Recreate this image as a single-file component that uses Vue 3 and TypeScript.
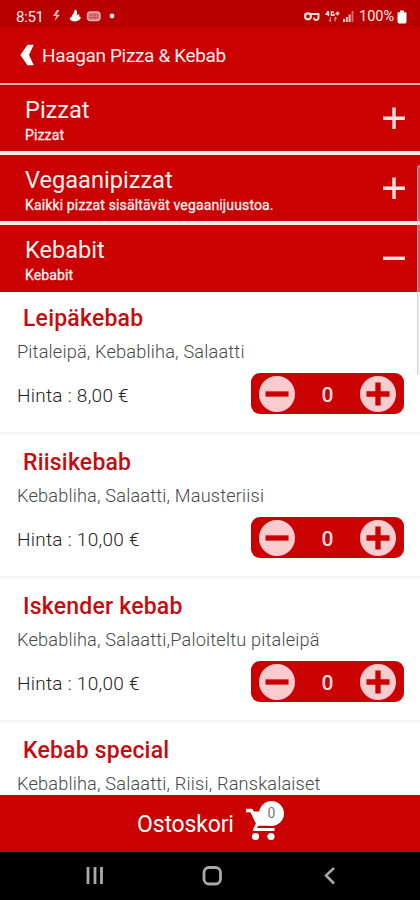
<script setup lang="ts">
import { reactive, ref, computed } from 'vue'

interface Category {
  name: string
  note: string
  open: boolean
}

interface Dish {
  name: string
  contents: string
  price: string
  count: number
}

const categories = reactive<Category[]>([
  { name: 'Pizzat', note: 'Pizzat', open: false },
  { name: 'Vegaanipizzat', note: 'Kaikki pizzat sisältävät vegaanijuustoa.', open: false },
  { name: 'Kebabit', note: 'Kebabit', open: true },
])

const dishes = reactive<Dish[]>([
  { name: 'Leipäkebab', contents: 'Pitaleipä, Kebabliha, Salaatti', price: '8,00 €', count: 0 },
  { name: 'Riisikebab', contents: 'Kebabliha, Salaatti, Mausteriisi', price: '10,00 €', count: 0 },
  { name: 'Iskender kebab', contents: 'Kebabliha, Salaatti,Paloiteltu pitaleipä', price: '10,00 €', count: 0 },
])

const nextDish = { name: 'Kebab special', contents: 'Kebabliha, Salaatti, Riisi, Ranskalaiset' }

const clock = ref('8:51')
const total = computed(() => dishes.reduce((sum, d) => sum + d.count, 0))

function change(dish: Dish, step: number) {
  dish.count = Math.max(0, dish.count + step)
}
</script>

<template>
  <div class="phone">
    <div class="status">
      <span class="clock">{{ clock }}</span>
      <svg class="left-icons" width="66" height="16" viewBox="0 0 66 16">
        <path d="M7 2 3 8h3.2L4.6 13 10 6.8H6.6L9.5 2Z" fill="#f3b8b8" />
        <path d="M25 1.500c2.500 1 2.600 3.500 1.400 6l2-1.200c1.200 0 1.400 1.200.3 2.200 2.600-.2 2.600 1.700.6 3.300-2.600 2.200-7 2-8.900.2-1.200-1.300-.3-3.300 1.300-3.100C21.500 7 23 6.500 23.600 5.200 24.400 4 24.300 2.700 25 1.500Z" fill="#fff" />
        <rect x="37.500" y="4" width="12.500" height="8.500" rx="3" fill="#d87878" stroke="#f0b0b0" stroke-width="1.400" />
        <path d="M39.500 7h8.500M39.500 9.700h8.500" stroke="#c03030" stroke-width="1" stroke-dasharray="1.500 1" />
        <circle cx="62" cy="8" r="2.400" fill="#ffe9e9" />
      </svg>
      <svg class="right-icons" width="54" height="16" viewBox="0 0 54 16">
        <circle cx="5" cy="8.300" r="3" fill="none" stroke="#fbdcdc" stroke-width="2.200" />
        <path d="M7 6h8.500v3.500c0 1.500-1.200 2.500-2.500 2.500s-2-1-2-2.200" fill="none" stroke="#fbdcdc" stroke-width="1.900" />
        <path d="M25.300 3 23.400 6.200h3M25.400 3v5M31 4h-2.500v3.300H31V5.800M32.500 5.500h4M34.500 3.500v4" fill="none" stroke="#fbdcdc" stroke-width="1.500" />
        <path d="M27.500 9v4.500m-1.500-1.500 1.500 1.500M32 13.500V9m0 0 1.500 1.500" fill="none" stroke="#e78f8f" stroke-width="1.200" />
        <path d="M40 11h2v3h-2zM42.800 9h2v5h-2zM45.600 6.500h2V14h-2z" fill="#f6c9c9" />
        <path d="M48.500 3h2v11h-2z" fill="#db6b6b" />
      </svg>
      <span class="percent">100%</span>
      <svg class="battery" width="10" height="14" viewBox="0 0 10 14">
        <path d="M3 .5h4v1.700h1.200q1.300 0 1.300 1.300v8.200q0 1.800-1.800 1.800H2.300Q.5 13.500.5 11.700V3.500q0-1.300 1.300-1.300H3Z" fill="#fff" />
      </svg>
    </div>

    <header class="header">
      <svg class="back" width="14" height="22" viewBox="0 0 14 22">
        <path d="M7.500.8H13.800L9 11l4.800 10.200H7.500L.4 11Z" fill="#fff" />
      </svg>
      <h1>Haagan Pizza &amp; Kebab</h1>
    </header>

    <main class="menu">
      <section
        v-for="category in categories"
        :key="category.name"
        class="category"
        @click="category.open = !category.open"
      >
        <div>
          <h2>{{ category.name }}</h2>
          <p>{{ category.note }}</p>
        </div>
        <svg class="toggle" width="22" height="22" viewBox="0 0 22 22">
          <path :d="category.open ? 'M0 11.300h22' : 'M0 11.300h22M11 .5v21.500'" stroke="#ffe3e3" stroke-width="3.400" />
        </svg>
      </section>

      <article v-for="dish in dishes" :key="dish.name" class="dish">
        <h3>{{ dish.name }}</h3>
        <p class="contents">{{ dish.contents }}</p>
        <div class="order">
          <span class="price">Hinta : {{ dish.price }}</span>
          <div class="stepper">
            <button @click="change(dish, -1)">
              <svg width="36" height="36" viewBox="0 0 36 36">
                <circle cx="18" cy="18" r="18" fill="#facccf" />
                <path d="M6.500 18h23" stroke="#cb0000" stroke-width="5.300" />
              </svg>
            </button>
            <span class="count">{{ dish.count }}</span>
            <button @click="change(dish, 1)">
              <svg width="36" height="36" viewBox="0 0 36 36">
                <circle cx="18" cy="18" r="18" fill="#facccf" />
                <path d="M6.500 18h23M18 6.500v23" stroke="#cb0000" stroke-width="5.300" />
              </svg>
            </button>
          </div>
        </div>
      </article>
      <article class="dish last">
        <h3>{{ nextDish.name }}</h3>
        <p class="contents">{{ nextDish.contents }}</p>
      </article>
      <i class="scrollbar"></i>
    </main>

    <footer class="cart">
      <span class="cart-label">Ostoskori</span>
      <div class="cart-icon">
        <svg width="40" height="40" viewBox="0 0 40 40">
          <path d="M1 6.500h5.500L13 20h14" fill="none" stroke="#fff" stroke-width="3.400" stroke-linejoin="round" />
          <path d="M6 7.500h24l-2 13.500H12.500Z" fill="#fff" />
          <path d="M12.500 20 9.500 25.600H29.500" fill="none" stroke="#fff" stroke-width="3" stroke-linejoin="round" />
          <circle cx="10.500" cy="32.500" r="3.600" fill="#fff" />
          <circle cx="26" cy="32.500" r="3.600" fill="#fff" />
        </svg>
        <span class="badge">{{ total }}</span>
      </div>
    </footer>

    <nav class="system">
      <svg width="420" height="48" viewBox="0 0 420 48" fill="none" stroke="#a9a9a9">
        <path d="M88 15v17M95 15v17M101.500 15v17" stroke-width="2.800" />
        <rect x="204" y="15.500" width="16.500" height="16.500" rx="5" stroke-width="2.800" />
        <path d="M334 16 326 23.500l8 8" stroke-width="2.500" />
      </svg>
    </nav>
  </div>
</template>

<style>
body {
  margin: 0;
  background: #000;
}
</style>

<style scoped>
.phone {
  width: 420px;
  height: 900px;
  display: flex;
  flex-direction: column;
  overflow: hidden;
  background: #fff;
  font-family: Roboto, "Liberation Sans", sans-serif;
}

h1,
h2,
h3,
p {
  margin: 0;
  font-weight: 400;
  white-space: nowrap;
}

.status {
  flex: none;
  height: 27px;
  box-sizing: border-box;
  padding: 7px 13px 0 16px;
  display: flex;
  align-items: flex-start;
  background: #b80000;
  color: #ffe9e9;
  font-size: 15px;
  line-height: 20px;
}

.clock {
  width: 34px;
  letter-spacing: -0.3px;
}

.left-icons {
  margin-top: 1px;
}

.right-icons {
  margin: 1px 2px 0 auto;
}

.percent {
  width: 38px;
  font-size: 14.5px;
}

.battery {
  margin-top: 3px;
}

.header {
  flex: none;
  height: 58px;
  box-sizing: border-box;
  padding: 0 20px;
  display: flex;
  align-items: center;
  gap: 8px;
  background: #cb0000;
  border-bottom: 2px solid #f7b0b0;
  color: #ffecec;
}

.header h1 {
  padding-top: 2px;
  font-size: 19px;
  line-height: 24px;
  letter-spacing: -0.35px;
}

.menu {
  position: relative;
  flex: 1;
  min-height: 0;
}

.category {
  height: 70px;
  box-sizing: border-box;
  padding: 10px 15px 0 25px;
  display: flex;
  justify-content: space-between;
  background: #cb0000;
  border-bottom: 4px solid #ffe8e8;
  color: #fff0f0;
}

.category:nth-of-type(3) {
  height: 67px;
  border-bottom: 0;
}

.category h2 {
  font-size: 23.6px;
  line-height: 30px;
}

.category p {
  font-size: 14px;
  line-height: 20px;
  letter-spacing: 0.14px;
  -webkit-text-stroke: 0.3px currentColor;
}

.toggle {
  margin-top: 12px;
}

.dish {
  height: 144px;
  box-sizing: border-box;
  padding: 13px 16px 0 17px;
  border-bottom: 3px solid #f7f7f7;
}

.dish:first-of-type {
  height: 143px;
  padding-top: 12px;
}

.dish.last {
  height: 71px;
  border-bottom: 0;
}

.dish h3 {
  padding-left: 6px;
  color: #c90a0c;
  font-size: 23px;
  font-weight: 500;
  line-height: 30px;
  letter-spacing: 0.2px;
}

.contents {
  margin-top: 7px;
  color: #484848;
  font-size: 18.2px;
  font-weight: 300;
  line-height: 22px;
  letter-spacing: 0.17px;
}

.order {
  margin-top: 10px;
  display: flex;
  justify-content: space-between;
  align-items: center;
}

.price {
  padding-top: 3px;
  color: #222;
  font-size: 19px;
  font-weight: 300;
  letter-spacing: 0.27px;
}

.stepper {
  width: 153px;
  height: 41px;
  box-sizing: border-box;
  padding: 0 8px;
  display: flex;
  align-items: center;
  justify-content: space-between;
  border-radius: 9px;
  background: #cb0000;
}

.stepper button {
  display: block;
  padding: 0;
  border: 0;
  background: none;
  line-height: 0;
}

.count {
  padding-top: 2px;
  color: #ffdcdc;
  font-size: 21px;
  font-weight: 500;
}

.scrollbar {
  position: absolute;
  top: 80px;
  right: 0;
  width: 3px;
  height: 210px;
  box-sizing: border-box;
  border: 1px solid rgba(190, 190, 190, 0.6);
  border-right: 0;
  border-radius: 4px 0 0 4px;
  background: rgba(225, 225, 225, 0.4);
}

.cart {
  position: relative;
  flex: none;
  height: 57px;
  padding-left: 137px;
  display: flex;
  align-items: center;
  background: #cb0000;
  color: #fff;
}

.cart-label {
  width: 108px;
  padding-top: 2px;
  font-size: 23px;
  letter-spacing: -0.15px;
}

.cart-icon {
  position: relative;
  height: 40px;
}

.badge {
  position: absolute;
  top: -3px;
  left: 14px;
  width: 25px;
  height: 25px;
  border-radius: 50%;
  background: #fff;
  color: #777;
  font-size: 14px;
  line-height: 25px;
  text-align: center;
}

.system {
  flex: none;
  height: 48px;
  background: #000;
}
</style>
